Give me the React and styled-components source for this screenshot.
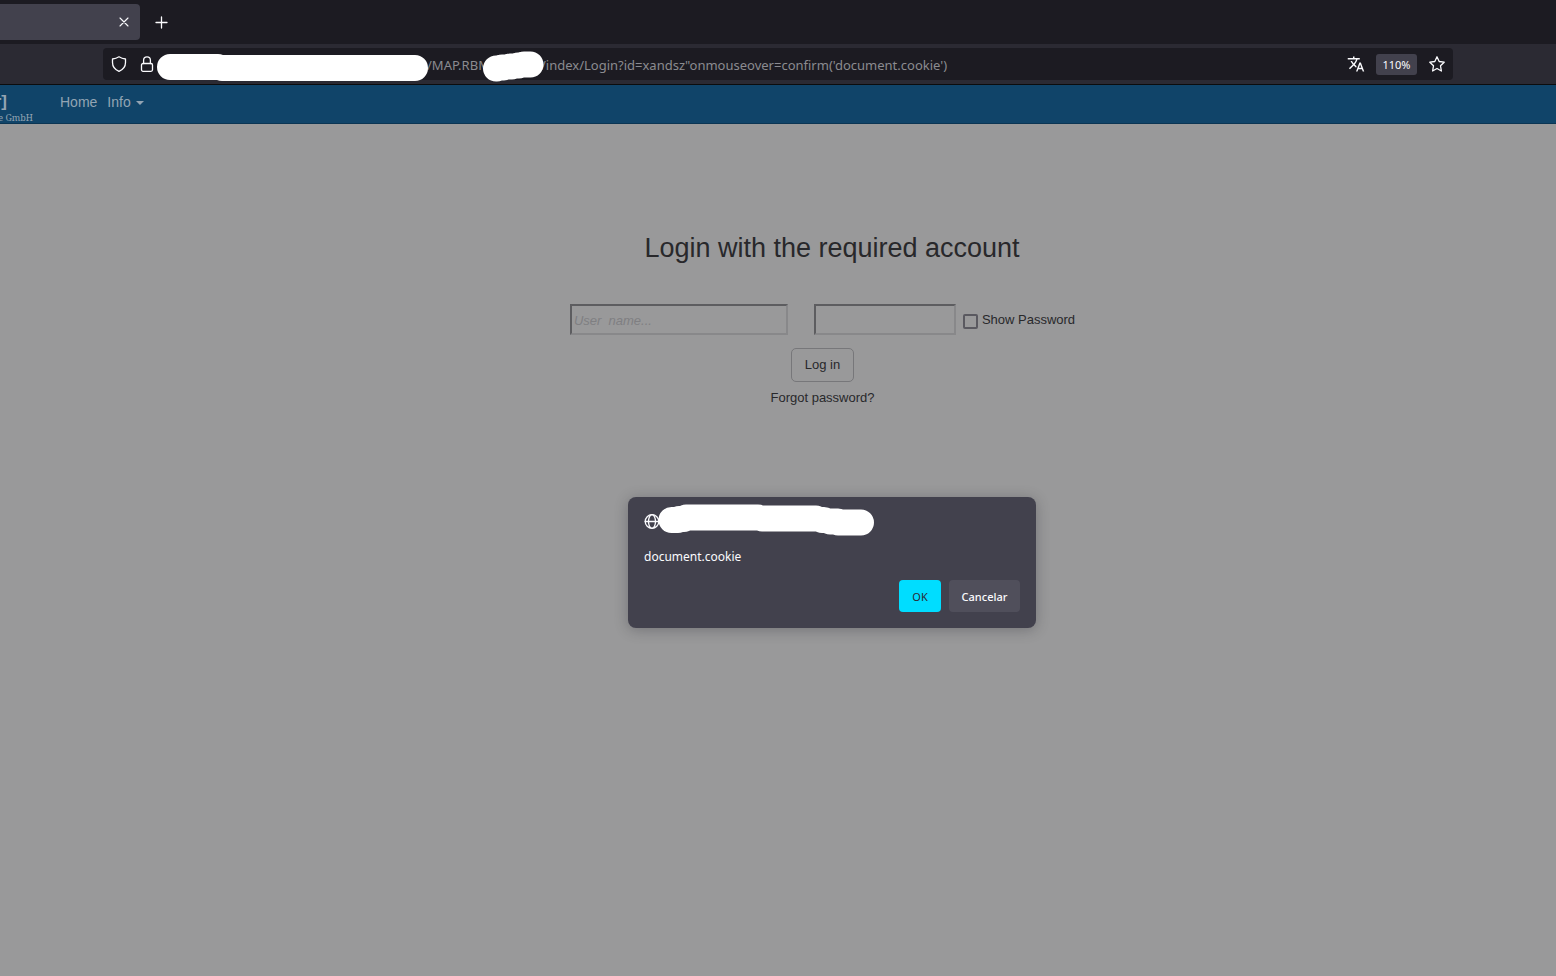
import React from "react";
import styled, { createGlobalStyle } from "styled-components";
import { MdTranslate } from "react-icons/md";

const GlobalStyle = createGlobalStyle`
  *, *::before, *::after { box-sizing: border-box; }
  html, body, #root { min-height: 100vh; }
  body {
    margin: 0;
    background: #99999a;
    font-family: "Liberation Sans", Arial, sans-serif;
    font-size: 13px;
    color: #28282b;
    overflow-x: hidden;
  }
  button, input { font: inherit; color: inherit; }
`;

const uiFont = `"Noto Sans", "Open Sans", sans-serif`;

const Window = styled.div`
  display: flex;
  flex-direction: column;
  min-height: 100vh;
`;

const TabStrip = styled.div`
  display: flex;
  align-items: center;
  gap: 10px;
  height: 44px;
  background: #1c1b22;
`;

const Tab = styled.div`
  display: flex;
  align-items: center;
  justify-content: flex-end;
  width: 140px;
  height: 36px;
  padding-right: 4px;
  border-radius: 0 4px 4px 0;
  background: #42414d;
`;

const IconButton = styled.button`
  display: flex;
  align-items: center;
  justify-content: center;
  flex: none;
  width: ${(p) => p.$width || 24}px;
  height: 24px;
  padding: 0;
  border: 0;
  background: none;
  color: #fbfbfe;
`;

const Toolbar = styled.div`
  height: 41px;
  padding: 4px 103px;
  background: #2b2a33;
  border-bottom: 1px solid #0c0c0d;
`;

const AddressBar = styled.div`
  display: flex;
  align-items: center;
  height: 32px;
  padding: 0 4px 0 2px;
  border-radius: 4px;
  background: #1c1b22;
`;

const AddressText = styled.span`
  flex: none;
  width: 58px;
  padding-top: 2px;
  white-space: nowrap;
  font: 13px/20px ${uiFont};
  color: #8b8b90;
`;

const AddressInput = styled.input`
  flex: 1;
  min-width: 0;
  height: 24px;
  padding: 2px 0 0;
  border: 0;
  outline: 0;
  background: none;
  font: 13px/20px ${uiFont};
  color: #8b8b90;
`;

const Marker = styled.svg`
  flex: none;
  position: relative;
  z-index: 1;
  overflow: visible;
  fill: none;
  stroke: #fff;
  stroke-width: 26;
  stroke-linecap: round;
  stroke-linejoin: round;
`;

const ZoomButton = styled.button`
  flex: none;
  width: 41px;
  height: 21px;
  margin: 0 8px;
  padding: 1px 0 0;
  border: 0;
  border-radius: 3px;
  background: #42414d;
  font: 11px/20px ${uiFont};
  color: #fbfbfe;
`;

const NavBar = styled.nav`
  display: flex;
  height: 39px;
  background: #104469;
  border-bottom: 1px solid #0b3553;
  color: #93a4b3;
`;

const Brand = styled.a`
  display: flex;
  flex-direction: column;
  width: 33px;
  height: 38px;
  padding-top: 7px;
  color: inherit;
  text-decoration: none;
`;

const BrandName = styled.span`
  align-self: flex-start;
  display: flex;
  justify-content: flex-end;
  width: 7px;
  font: bold 17px/20px "Liberation Sans", Arial, sans-serif;
`;

const BrandSuffix = styled.span`
  display: flex;
  justify-content: flex-end;
  white-space: nowrap;
  font: 9px/11px "Noto Serif", "Liberation Serif", serif;
`;

const NavLinks = styled.div`
  display: flex;
  gap: 10px;
  margin-left: 27px;
  padding-top: 7px;
`;

const NavLink = styled.a`
  display: flex;
  align-items: center;
  gap: 5px;
  height: 20px;
  font-size: 14px;
  color: inherit;
  text-decoration: none;
`;

const Caret = styled.span`
  margin-top: 2px;
  border: 4px solid transparent;
  border-top-color: currentColor;
  border-bottom: 0;
`;

const Page = styled.main`
  position: relative;
  display: flex;
  flex-direction: column;
  align-items: center;
  flex: 1;
  padding: 106px 0 0 108px;
`;

const Heading = styled.h1`
  margin: 0;
  font-size: 27px;
  line-height: 36px;
  font-weight: 400;
`;

const LoginForm = styled.form`
  display: flex;
  flex-direction: column;
  align-items: center;
  margin: 38px 19px 0 0;
`;

const FieldRow = styled.div`
  display: flex;
  align-items: center;
`;

const Field = styled.input`
  width: ${(p) => p.$width}px;
  height: 31px;
  padding: 1px 2px 0;
  border: 2px solid;
  border-color: #5d5d60 #88888a #88888a #5d5d60;
  background: transparent;
  outline: 0;
  &::placeholder {
    color: #7f7f82;
    font-style: italic;
    opacity: 1;
  }
  & + & { margin-left: 26px; }
`;

const CheckLabel = styled.label`
  display: flex;
  align-items: center;
  gap: 4px;
  margin-left: 7px;
  white-space: nowrap;
`;

const CheckBox = styled.input`
  appearance: none;
  width: 15px;
  height: 15px;
  margin: 3px 0 0;
  border: 2px solid #5a5960;
  border-radius: 2px;
`;

const LoginButton = styled.button`
  width: 63px;
  height: 34px;
  margin-top: 13px;
  padding: 0 0 2px;
  border: 1px solid #77777a;
  border-radius: 5px;
  background: transparent;
`;

const ForgotLink = styled.a`
  margin-top: 8px;
  line-height: 16px;
  color: inherit;
  text-decoration: none;
`;

const DialogLayer = styled.div`
  position: absolute;
  inset: 0 0 auto 108px;
  display: flex;
  justify-content: center;
  padding-top: 373px;
`;

const Dialog = styled.section`
  display: flex;
  flex-direction: column;
  width: 408px;
  padding: 16px;
  border-radius: 8px;
  background: #42414d;
  box-shadow: 0 2px 14px rgba(30, 30, 40, 0.3);
  font: 12px/16px ${uiFont};
  color: #fbfbfe;
`;

const DialogHeader = styled.header`
  display: flex;
  align-items: center;
  height: 16px;
`;

const DialogMessage = styled.p`
  margin: 20px 0 15px;
`;

const DialogActions = styled.div`
  display: flex;
  justify-content: flex-end;
  gap: 8px;
`;

const DialogButton = styled.button`
  width: ${(p) => p.$width}px;
  height: 32px;
  padding: 2px 0 0;
  border: 0;
  border-radius: 4px;
  background: ${(p) => (p.$primary ? "#00ddff" : "#504f5b")};
  color: ${(p) => (p.$primary ? "#2b2a33" : "#fbfbfe")};
  font-size: 11px;
  font-weight: ${(p) => (p.$primary ? 400 : 500)};
`;

const Glyph = ({ size = 16, children, stroke = 1.3 }) => (
  <svg width={size} height={size} viewBox="0 0 16 16" fill="none" stroke="currentColor"
    strokeWidth={stroke} strokeLinecap="round" strokeLinejoin="round" aria-hidden="true">
    {children}
  </svg>
);

export default function App() {
  return (
    <>
      <GlobalStyle />
      <Window>
        <TabStrip>
          <Tab>
            <IconButton aria-label="Close tab">
              <Glyph stroke={1.1}><path d="M4 4l8 8M12 4l-8 8" /></Glyph>
            </IconButton>
          </Tab>
          <IconButton aria-label="New tab">
            <Glyph><path d="M7.500 3v11M2 8.500h11" /></Glyph>
          </IconButton>
        </TabStrip>

        <Toolbar>
          <AddressBar>
            <IconButton $width={28} aria-label="Tracking protection">
              <Glyph>
                <path d="M8 0.8c2 1.3 4.300 2 6.500 2.200v3.500c0 3.900-2.600 7.200-6.500 8.800C4.100 13.700 1.500 10.400 1.500 6.500V3C3.700 2.800 6 2.100 8 .8z" />
              </Glyph>
            </IconButton>
            <IconButton $width={28} aria-label="Site information">
              <Glyph>
                <rect x="2.500" y="7.500" width="11" height="7.800" rx="1.500" />
                <path d="M4.600 7.500V4.200a3.400 3.400 0 0 1 6.800 0v3.300" />
              </Glyph>
            </IconButton>
            <Marker width="266" height="32" viewBox="161 48 266 32" aria-hidden="true">
              <path d="M170 67H218M222 68H415" />
            </Marker>
            <AddressText>/MAP.RBM</AddressText>
            <Marker width="56" height="32" viewBox="485 48 56 32" aria-hidden="true">
              <path d="M496 68.500H497M502 67.500H504M510 66.500H512M518 65.500H519M524 64.500H530.500" />
            </Marker>
            <AddressInput
              aria-label="Address"
              defaultValue={`/index/Login?id=xandsz"onmouseover=confirm('document.cookie')`}
            />
            <IconButton aria-label="Translate page"><MdTranslate size={18} /></IconButton>
            <ZoomButton>110%</ZoomButton>
            <IconButton aria-label="Bookmark page">
              <Glyph>
                <path d="M8 .8l2.200 4.700 5 .7-3.700 3.600.9 5.200L8 12.500 3.600 15l.9-5.200L.8 6.200l5-.7z" />
              </Glyph>
            </IconButton>
          </AddressBar>
        </Toolbar>

        <NavBar>
          <Brand href="#">
            <BrandName>r]</BrandName>
            <BrandSuffix>e GmbH</BrandSuffix>
          </Brand>
          <NavLinks>
            <NavLink href="#">Home</NavLink>
            <NavLink href="#">Info <Caret /></NavLink>
          </NavLinks>
        </NavBar>

        <Page>
          <Heading>Login with the required account</Heading>
          <LoginForm>
            <FieldRow>
              <Field $width={218} type="text" placeholder="User  name..." aria-label="User name" />
              <Field $width={142} type="password" aria-label="Password" />
              <CheckLabel>
                <CheckBox type="checkbox" />
                Show Password
              </CheckLabel>
            </FieldRow>
            <LoginButton type="button">Log in</LoginButton>
            <ForgotLink href="#">Forgot password?</ForgotLink>
          </LoginForm>

          <DialogLayer>
            <Dialog role="dialog" aria-label="Confirm">
              <DialogHeader>
                <Glyph>
                  <circle cx="8" cy="8.500" r="6.800" />
                  <ellipse cx="8" cy="8.500" rx="3.500" ry="6.800" />
                  <path d="M1.200 8.500h13.600" />
                </Glyph>
                <Marker width="216" height="16" viewBox="660 513 216 16" aria-hidden="true">
                  <path d="M671.500 520H678M679 519H684M686 517.500H758M762 518.500H816M822 520H824M830 521.500H838M838 522.500H861" />
                </Marker>
              </DialogHeader>
              <DialogMessage>document.cookie</DialogMessage>
              <DialogActions>
                <DialogButton $primary $width={42}>OK</DialogButton>
                <DialogButton $width={71}>Cancelar</DialogButton>
              </DialogActions>
            </Dialog>
          </DialogLayer>
        </Page>
      </Window>
    </>
  );
}
